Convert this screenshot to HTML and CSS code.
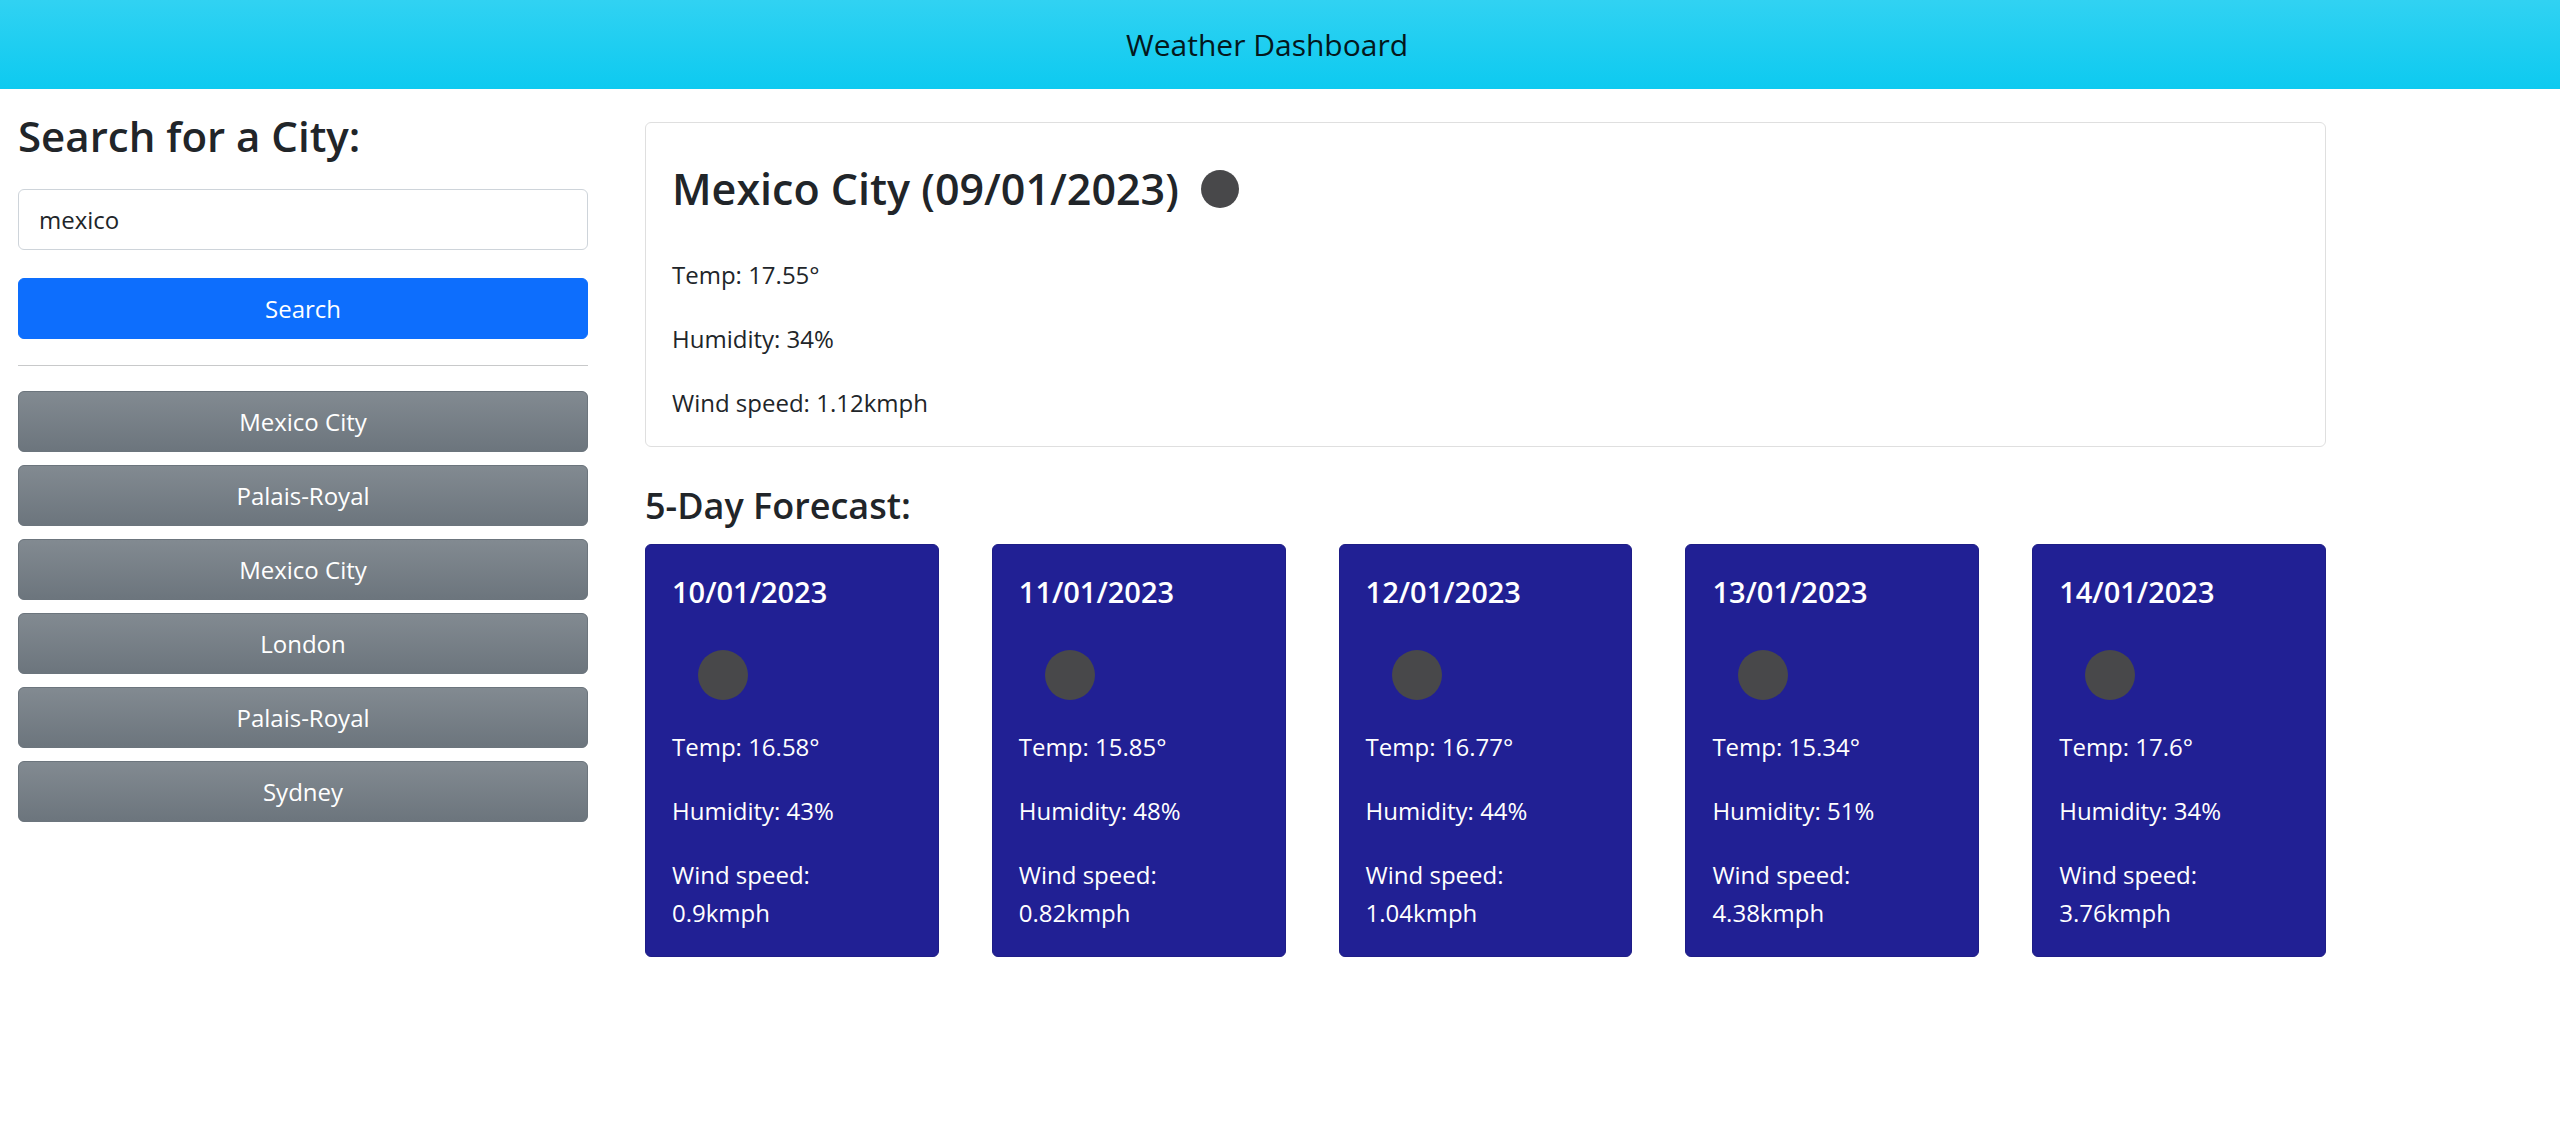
FILE: index.html
```html
<!DOCTYPE html>
<html lang="en">
<head>
<meta charset="utf-8">
<meta name="viewport" content="width=device-width, initial-scale=1">
<title>Weather Dashboard</title>
<link rel="stylesheet" href="styles.css">
</head>
<body>
<header class="navbar"><h1 class="brand">Weather Dashboard</h1></header>
<div class="layout">
  <aside class="sidebar">
    <form class="search-form">
      <label class="search-label" for="city">Search for a City:</label>
      <input class="search-input" id="city" type="text" value="mexico">
      <button class="btn btn-primary" type="button">Search</button>
    </form>
    <hr class="divider">
    <div class="history">
      <button class="btn btn-secondary" type="button">Mexico City</button>
      <button class="btn btn-secondary" type="button">Palais-Royal</button>
      <button class="btn btn-secondary" type="button">Mexico City</button>
      <button class="btn btn-secondary" type="button">London</button>
      <button class="btn btn-secondary" type="button">Palais-Royal</button>
      <button class="btn btn-secondary" type="button">Sydney</button>
    </div>
  </aside>
  <main class="content">
    <section class="today">
      <h2 class="today-title">Mexico City (09/01/2023)
        <svg class="today-icon" viewBox="0 0 50 50" aria-hidden="true"><circle cx="25" cy="25" r="25" fill="#48484a"/></svg>
      </h2>
      <p>Temp: 17.55°</p>
      <p>Humidity: 34%</p>
      <p>Wind speed: 1.12kmph</p>
    </section>
    <h3 class="forecast-title">5-Day Forecast:</h3>
    <section class="forecast">
      <article class="day">
        <h4 class="day-title">10/01/2023</h4>
        <svg class="day-icon" viewBox="0 0 50 50" aria-hidden="true"><circle cx="25" cy="25" r="25" fill="#48484a"/></svg>
        <p>Temp: 16.58°</p>
        <p>Humidity: 43%</p>
        <p>Wind speed: 0.9kmph</p>
      </article>
      <article class="day">
        <h4 class="day-title">11/01/2023</h4>
        <svg class="day-icon" viewBox="0 0 50 50" aria-hidden="true"><circle cx="25" cy="25" r="25" fill="#48484a"/></svg>
        <p>Temp: 15.85°</p>
        <p>Humidity: 48%</p>
        <p>Wind speed: 0.82kmph</p>
      </article>
      <article class="day">
        <h4 class="day-title">12/01/2023</h4>
        <svg class="day-icon" viewBox="0 0 50 50" aria-hidden="true"><circle cx="25" cy="25" r="25" fill="#48484a"/></svg>
        <p>Temp: 16.77°</p>
        <p>Humidity: 44%</p>
        <p>Wind speed: 1.04kmph</p>
      </article>
      <article class="day">
        <h4 class="day-title">13/01/2023</h4>
        <svg class="day-icon" viewBox="0 0 50 50" aria-hidden="true"><circle cx="25" cy="25" r="25" fill="#48484a"/></svg>
        <p>Temp: 15.34°</p>
        <p>Humidity: 51%</p>
        <p>Wind speed: 4.38kmph</p>
      </article>
      <article class="day">
        <h4 class="day-title">14/01/2023</h4>
        <svg class="day-icon" viewBox="0 0 50 50" aria-hidden="true"><circle cx="25" cy="25" r="25" fill="#48484a"/></svg>
        <p>Temp: 17.6°</p>
        <p>Humidity: 34%</p>
        <p>Wind speed: 3.76kmph</p>
      </article>
    </section>
  </main>
</div>
</body>
</html>
```
FILE: styles.css
```css
* {
  box-sizing: border-box;
}

body {
  margin: 0;
  background: #fff;
  color: #212529;
  font-family: "Segoe UI", "Open Sans", "Noto Sans", sans-serif;
  font-size: 24px;
  line-height: 38px;
}

h1, h2, h3, h4, p {
  margin: 0;
}

.navbar {
  display: flex;
  justify-content: center;
  padding: 21px 26px 20px 0;
  background: #0dcaf0 linear-gradient(180deg, #31d2f2, #0dcaf0);
}

.brand {
  color: #04181d;
  font-size: 30px;
  font-weight: 400;
  line-height: 48px;
}

.layout {
  display: grid;
  grid-template-columns: 570fr 1681fr;
  align-items: start;
  gap: 57px;
  padding: 0 234px 0 18px;
}

.sidebar {
  padding-top: 20px;
}

.search-form {
  display: flex;
  flex-direction: column;
}

.search-label {
  margin-bottom: 26px;
  font-size: 42px;
  font-weight: 600;
  line-height: 54px;
}

.search-input {
  width: 100%;
  height: 61px;
  margin-bottom: 28px;
  padding: 0 20px;
  border: 1px solid #ced4da;
  border-radius: 6px;
  background: #fff;
  color: inherit;
  font: inherit;
}

.btn {
  width: 100%;
  height: 61px;
  padding: 0 20px;
  border: 1px solid;
  border-radius: 6px;
  color: #fff;
  font: inherit;
}

.btn-primary {
  border-color: #0d6efd;
  background: #0d6efd;
}

.btn-secondary {
  border-color: #6c757d;
  background: #6c757d linear-gradient(180deg, #828a91, #6c757d);
}

.divider {
  margin: 26px 0 25px;
  border: 0;
  border-top: 1px solid #c8c9ca;
}

.history {
  display: grid;
  gap: 13px;
}

.content {
  padding-top: 33px;
}

.today {
  display: grid;
  gap: 26px;
  padding: 39px 26px 24px;
  border: 1px solid #dfdfdf;
  border-radius: 6px;
}

.today-title {
  display: flex;
  align-items: center;
  gap: 22px;
  margin-bottom: 14px;
  font-size: 43px;
  font-weight: 600;
  line-height: 54px;
}

.today-icon {
  width: 38px;
  height: 38px;
}

.forecast-title {
  margin: 35px 0 14px;
  font-size: 36px;
  font-weight: 600;
  line-height: 48px;
}

.forecast {
  display: grid;
  grid-template-columns: repeat(5, 1fr);
  gap: 53px;
}

.day {
  display: grid;
  gap: 26px;
  padding: 28px 26px 24px;
  border: 1px solid #1e1d86;
  border-radius: 6px;
  background: #212094;
  color: #fff;
}

.day-title {
  margin-bottom: 13px;
  font-size: 29px;
  font-weight: 600;
  line-height: 38px;
}

.day-icon {
  width: 50px;
  height: 50px;
  margin: 0 0 2px 26px;
}
```
